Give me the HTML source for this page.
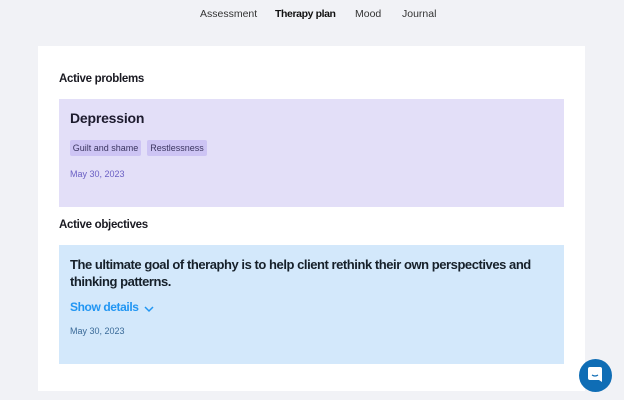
<!DOCTYPE html>
<html><head><style>
body{margin:0;width:624px;height:400px;background:#f1f2f6;font-family:"Liberation Sans",sans-serif;position:relative;overflow:hidden;color:#1a1a22}
.a{position:absolute;white-space:nowrap}
.nav{top:8px;font-size:10.5px;color:#333}
</style></head><body>
<div class="a nav" style="left:200px">Assessment</div>
<div class="a nav" style="left:275px;font-weight:bold;color:#111;letter-spacing:-0.4px">Therapy plan</div>
<div class="a nav" style="left:355px">Mood</div>
<div class="a nav" style="left:402px">Journal</div>
<div class="a" style="left:38px;top:46px;width:547px;height:345px;background:#fff"></div>
<div class="a" style="left:59px;top:73px;font-size:11.5px;font-weight:bold;letter-spacing:-0.3px">Active problems</div>
<div class="a" style="left:59px;top:99px;width:505px;height:108px;background:#e3dff8"></div>
<div class="a" style="left:70px;top:110px;font-size:14px;font-weight:bold;color:#1d1b2e;letter-spacing:-0.2px">Depression</div>
<div class="a" style="left:70px;top:140px;width:71px;height:16px;background:#cdc4f4;border-radius:2px;font-size:9px;line-height:16px;text-align:center;color:#3b3560">Guilt and shame</div>
<div class="a" style="left:147px;top:140px;width:60px;height:16px;background:#cdc4f4;border-radius:2px;font-size:9px;line-height:16px;text-align:center;color:#3b3560">Restlessness</div>
<div class="a" style="left:70px;top:169px;font-size:9px;color:#6a5fc4">May 30, 2023</div>
<div class="a" style="left:59px;top:219px;font-size:11.5px;font-weight:bold;letter-spacing:-0.3px">Active objectives</div>
<div class="a" style="left:59px;top:245px;width:505px;height:119px;background:#d3e8fb"></div>
<div class="a" style="left:70px;top:256px;font-size:13px;font-weight:bold;line-height:17px;color:#16202a;letter-spacing:-0.45px">The ultimate goal of theraphy is to help client rethink their own perspectives and<br>thinking patterns.</div>
<div class="a" style="left:70px;top:300px;font-size:12px;font-weight:bold;color:#2196f3;letter-spacing:-0.4px">Show details</div>
<svg class="a" style="left:144px;top:305px" width="10" height="8"><path d="M1 2l4 4 4-4" stroke="#2196f3" stroke-width="1.5" fill="none"/></svg>
<div class="a" style="left:70px;top:326px;font-size:9px;color:#3a6a98">May 30, 2023</div>
<div class="a" style="left:579px;top:359px;width:33px;height:33px;border-radius:50%;background:#0f6db5"></div>
<svg class="a" style="left:587px;top:366px" width="16" height="18"><path d="M3 1h10a2 2 0 0 1 2 2v13l-3-2H3a2 2 0 0 1-2-2V3a2 2 0 0 1 2-2z" fill="#fff"/><path d="M5 9q3 2 6 0" stroke="#0f6db5" stroke-width="1.2" fill="none"/></svg>
</body></html>
